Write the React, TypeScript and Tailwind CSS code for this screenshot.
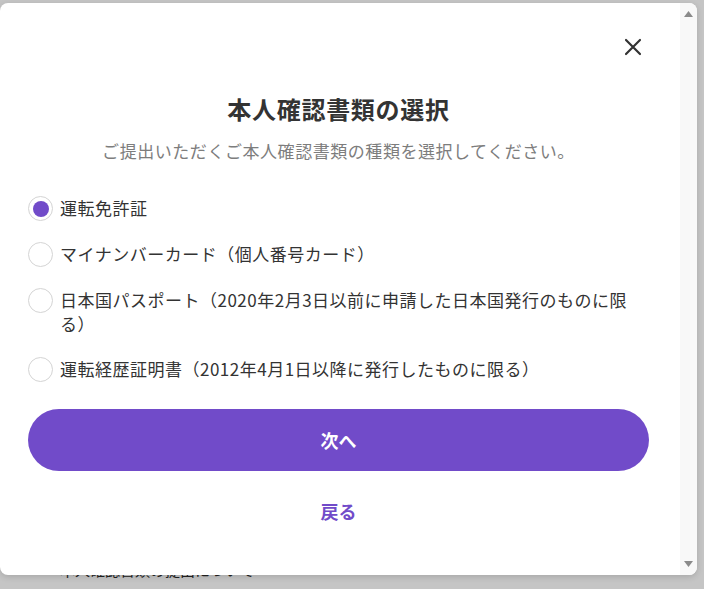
import React, { useState } from "react";

const options = [
  "運転免許証",
  "マイナンバーカード（個人番号カード）",
  "日本国パスポート（2020年2月3日以前に申請した日本国発行のものに限る）",
  "運転経歴証明書（2012年4月1日以降に発行したものに限る）",
];

export default function App() {
  const [selected, setSelected] = useState<number>(0); // which document is chosen

  return (
    <div className="relative h-[589px] w-[704px] overflow-hidden bg-[#c5c5c5] font-['Noto_Sans_CJK_JP',sans-serif]">
      {/* page behind the dialog */}
      <div className="pl-[60px] pt-[560px] text-[15px] leading-[20px] text-[#222]">本人確認書類の提出について</div>

      {/* Dialog */}
      <div className="absolute left-0 top-[3px] flex h-[572px] w-[697px] overflow-hidden rounded-[8px] bg-white shadow-[0_2px_6px_rgba(0,0,0,0.15)]">
        <div className="flex flex-1 flex-col pl-[28px] pr-[31px]">
          {/* close */}
          <div className="flex justify-end pr-[4px] pt-[32px]">
            <button className="flex h-[24px] w-[24px] items-center justify-center">
              <svg width="18" height="18" viewBox="0 0 18 18" fill="none" stroke="#333" strokeWidth="2.2" strokeLinecap="round">
                <path d="M2 2L16 16M16 2L2 16" />
              </svg>
            </button>
          </div>

          <h2 className="mt-[34px] text-center text-[24px] font-bold leading-[32px] tracking-[0.7px] text-[#333]">
            本人確認書類の選択
          </h2>
          <p className="mt-[14px] text-center text-[17px] leading-[24px] tracking-[0.55px] text-[#7d7d7d]">
            ご提出いただくご本人確認書類の種類を選択してください。
          </p>

          {/* options */}
          <div className="mt-[33px] flex flex-col gap-[21px]">
            {options.map((label, i) => (
              <label key={i} className="flex cursor-pointer items-start gap-[7px]" onClick={() => setSelected(i)}>
                <span className="flex h-[25px] w-[25px] shrink-0 items-center justify-center rounded-full border border-[#d4d4d4] bg-white">
                  {selected === i && <span className="h-[16px] w-[16px] rounded-full bg-[#714bc9]" />}
                </span>
                <span className="text-[17px] leading-[24px] tracking-[0.5px] text-[#333]">{label}</span>
              </label>
            ))}
          </div>

          <button className="mt-[27px] h-[62px] w-full rounded-full bg-[#714bc9] text-[18px] font-bold text-white">
            次へ
          </button>
          <button className="mt-[28px] self-center text-[18px] font-bold leading-[24px] text-[#714bc9]">戻る</button>
        </div>

        {/* scrollbar */}
        <div className="flex w-[17px] flex-col items-center justify-between bg-[#f8f8f8] py-[8px]">
          <svg width="9" height="6" viewBox="0 0 9 6">
            <path d="M4.5 0L9 6H0Z" fill="#8a8a8a" />
          </svg>
          <svg width="9" height="6" viewBox="0 0 9 6">
            <path d="M0 0H9L4.5 6Z" fill="#8a8a8a" />
          </svg>
        </div>
      </div>
    </div>
  );
}
